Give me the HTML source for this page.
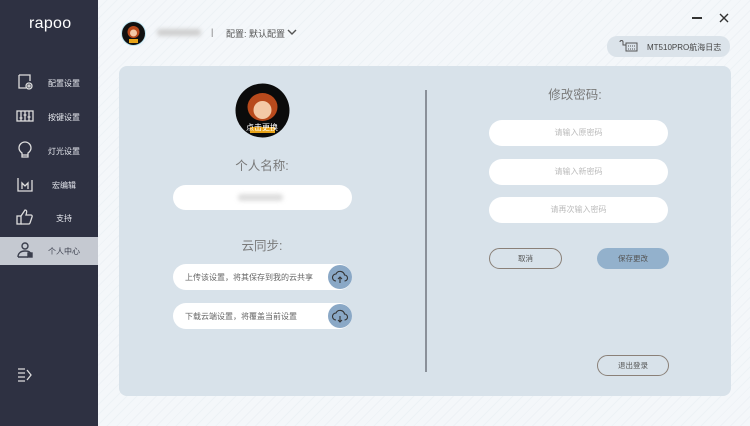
<!DOCTYPE html>
<html><head><meta charset="utf-8"><style>
*{margin:0;padding:0;box-sizing:border-box}
body{width:750px;height:426px;overflow:hidden;font-family:"Liberation Sans","Noto Sans CJK SC",sans-serif;background:#f1f5f8;position:relative}
.bg{position:absolute;left:98px;top:0;width:652px;height:426px;background:repeating-linear-gradient(135deg,#f4f7fa 0 6px,#edf2f6 6px 7px)}
.side{position:absolute;left:0;top:0;width:98px;height:426px;background:#2e3142}
.logo{position:absolute;left:29px;top:15px;color:#fff;font-size:16px;font-weight:normal;letter-spacing:0.3px}
.item{position:absolute;left:0;width:98px;height:28px;color:#e6e8ee;font-size:8px}
.item span{position:absolute;left:48px;top:9px}
.item svg{position:absolute;left:16px;top:4px}
.act{background:#c5c9d1;color:#3a3e4c}
.abs{position:absolute}
.panel{position:absolute;left:119px;top:66px;width:612px;height:330px;background:#d8e2ea;border-radius:8px}
.pill{position:absolute;background:#fff;border-radius:13px;font-size:8px;color:#666}
.ph{text-align:center;color:#bbb;line-height:26px}
.h{position:absolute;font-size:12.5px;color:#7a7a7a;text-align:center}
.btn{position:absolute;border-radius:11px;font-size:7.5px;text-align:center;line-height:19px;color:#555}
.cb{position:absolute;right:0;top:1px;width:24px;height:24px;border-radius:12px;background:#8aa8c6}
.blur{position:absolute;background:#cfcfcf;filter:blur(2px);border-radius:3px}
</style></head><body>
<div class="bg"></div>
<div class="side">
<div class="logo">rapoo</div>
<div class="item" style="top:69px"><svg width="18" height="18" viewBox="0 0 18 18" fill="none" stroke="#ddd" stroke-width="1.3"><path d="M3 2h11v6M3 2v13h7"/><circle cx="13" cy="13" r="3"/><circle cx="13" cy="13" r="1"/></svg><span>配置设置</span></div>
<div class="item" style="top:103px"><svg width="18" height="18" viewBox="0 0 18 18" fill="none" stroke="#ddd" stroke-width="1.3"><rect x="1" y="4" width="16" height="10"/><path d="M5 4v10M9 4v10M13 4v10M3.5 11h3M7.5 8h3M11.5 10h3"/></svg><span>按键设置</span></div>
<div class="item" style="top:137px"><svg width="18" height="18" viewBox="0 0 18 18" fill="none" stroke="#ddd" stroke-width="1.3"><path d="M6 12c-2-1.5-3-3-3-5a6 6 0 0112 0c0 2-1 3.5-3 5v4H6z"/><path d="M6 14h6"/></svg><span>灯光设置</span></div>
<div class="item" style="top:171px"><svg width="18" height="18" viewBox="0 0 18 18" fill="none" stroke="#ddd" stroke-width="1.3"><path d="M2 3v13h14V5"/><path d="M6 14V8l3 3 3-3v6"/></svg><span style="left:52px">宏编辑</span></div>
<div class="item" style="top:204px"><svg width="18" height="18" viewBox="0 0 18 18" fill="none" stroke="#ddd" stroke-width="1.3"><rect x="1" y="8" width="4" height="8"/><path d="M5 8l4-6c1.5 0 2 1 1.5 3L10 7h5c1 0 1.5 1 1 2l-2 6c-.3.7-1 1-1.5 1H5"/></svg><span style="left:56px">支持</span></div>
<div class="item act" style="top:237px"><svg width="18" height="18" viewBox="0 0 18 18" fill="none" stroke="#3a3e4c" stroke-width="1.4"><circle cx="9" cy="5" r="3"/><path d="M2 16c0-4 3-6 7-6s5 1 6 3M2 16h10"/><rect x="12" y="12" width="4" height="4" fill="#3a3e4c"/></svg><span>个人中心</span></div>
<svg class="abs" style="left:17px;top:368px" width="16" height="14" viewBox="0 0 16 14" fill="none" stroke="#ddd" stroke-width="1.3"><path d="M1 1h7M1 5h7M1 9h7M1 13h7M10 2l4 5-4 5"/></svg>
</div>

<svg class="abs" style="left:121px;top:21px" width="25" height="25"><circle cx="12.5" cy="12.5" r="12" fill="#111" stroke="#bfe6f2"/><circle cx="12.5" cy="11" r="6" fill="#b84a1c"/><circle cx="12.5" cy="12" r="3.5" fill="#f3c9a6"/><rect x="8" y="18" width="9" height="4" fill="#e8a317"/></svg>
<div class="blur" style="left:157px;top:29px;width:44px;height:7px"></div>
<div class="abs" style="left:211px;top:27px;font-size:9px;color:#777">|</div>
<div class="abs" style="left:226px;top:27px;font-size:9px;color:#555">配置: 默认配置</div>
<svg class="abs" style="left:287px;top:29px" width="10" height="7" fill="none" stroke="#555" stroke-width="1.4"><path d="M1 1l4 4 4-4"/></svg>
<div class="abs" style="left:692px;top:17px;width:10px;height:1.5px;background:#333"></div>
<svg class="abs" style="left:719px;top:13px" width="10" height="10" stroke="#333" stroke-width="1.4"><path d="M1 1l8 8M9 1l-8 8"/></svg>
<div class="abs" style="left:607px;top:36px;width:123px;height:21px;border-radius:10px;background:#dbe3ea"></div>
<svg class="abs" style="left:619px;top:39px" width="20" height="14" fill="none" stroke="#555" stroke-width="1"><path d="M1 3c0-2 3-2 3 0v3h3"/><rect x="7" y="4" width="11" height="8"/><path d="M9 7h7M9 10h7" stroke-dasharray="1 1"/></svg>
<div class="abs" style="left:647px;top:42px;font-size:8px;color:#444">MT510PRO航海日志</div>

<div class="panel"></div>
<svg class="abs" style="left:235px;top:83px" width="55" height="55"><circle cx="27.5" cy="27.5" r="27" fill="#0b0b0b"/><ellipse cx="27.5" cy="24" rx="15" ry="14" fill="#b84a1c"/><circle cx="27.5" cy="27" r="9" fill="#f3c9a6"/><rect x="15" y="44" width="25" height="6" fill="#e8a317"/></svg>
<div class="abs" style="left:246px;top:122px;font-size:8px;color:#fff">点击更换</div>
<div class="h" style="left:202px;top:155px;width:120px">个人名称:</div>
<div class="pill" style="left:173px;top:185px;width:179px;height:25px"></div>
<div class="blur" style="left:238px;top:194px;width:45px;height:7px;background:#ddd"></div>
<div class="h" style="left:202px;top:235px;width:120px">云同步:</div>
<div class="pill" style="left:173px;top:264px;width:179px;height:26px"><span class="abs" style="left:12px;top:8px">上传该设置，将其保存到我的云共享</span><div class="cb"><svg width="24" height="24" fill="none" stroke="#333" stroke-width="1.1"><path d="M8 16a3.5 3.5 0 010-7 4.5 4.5 0 018.5 1 3 3 0 010 6M12 18v-6M10 14l2-2 2 2"/></svg></div></div>
<div class="pill" style="left:173px;top:303px;width:179px;height:26px"><span class="abs" style="left:12px;top:8px">下载云端设置，将覆盖当前设置</span><div class="cb"><svg width="24" height="24" fill="none" stroke="#333" stroke-width="1.1"><path d="M8 16a3.5 3.5 0 010-7 4.5 4.5 0 018.5 1 3 3 0 010 6M12 12v6M10 16l2 2 2-2"/></svg></div></div>
<div class="abs" style="left:425px;top:90px;width:1.5px;height:282px;background:#8a9099"></div>

<div class="h" style="left:515px;top:84px;width:120px">修改密码:</div>
<div class="pill ph" style="left:489px;top:120px;width:179px;height:26px">请输入原密码</div>
<div class="pill ph" style="left:489px;top:159px;width:179px;height:26px">请输入新密码</div>
<div class="pill ph" style="left:489px;top:197px;width:179px;height:26px">请再次输入密码</div>
<div class="btn" style="left:489px;top:248px;width:73px;height:21px;border:1px solid #8a8078">取消</div>
<div class="btn" style="left:597px;top:248px;width:72px;height:21px;background:#93b1cc;line-height:21px">保存更改</div>
<div class="btn" style="left:597px;top:355px;width:72px;height:21px;border:1px solid #8a8078">退出登录</div>
</body></html>
